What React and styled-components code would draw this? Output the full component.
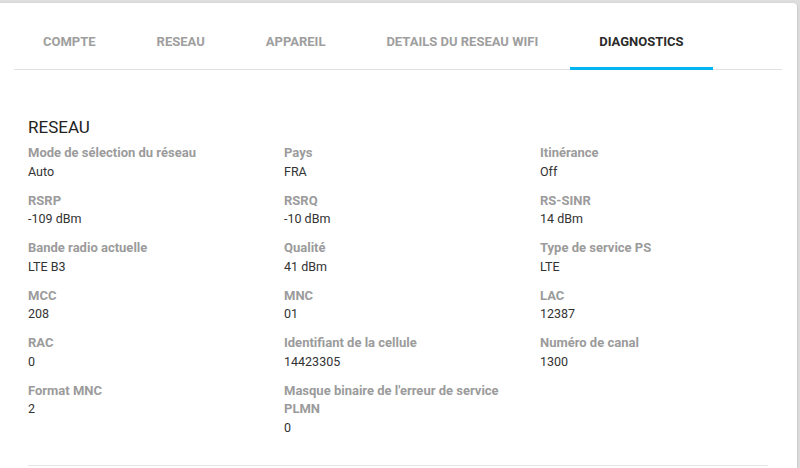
import React from 'react';
import styled, { createGlobalStyle } from 'styled-components';

const GlobalStyle = createGlobalStyle`
  html, body {
    margin: 0;
    padding: 0;
    background: #dedede;
    font-family: Roboto, 'Liberation Sans', sans-serif;
    overflow: hidden;
  }
`;

const Card = styled.div`
  margin-top: 3px;
  width: 797px;
  height: calc(100vh - 3px);
  overflow: hidden;
  background: #ffffff;
  border-top-right-radius: 4px;
  box-shadow: 0 1px 3px rgba(0, 0, 0, 0.18);
`;

const TabBar = styled.div`
  display: flex;
  gap: 3px;
  margin: 0 15px 0 14px;
  border-bottom: 1px solid #e0e0e0;
`;

const Tab = styled.div`
  box-sizing: border-box;
  height: 67px;
  padding: 32px 29px 0;
  margin-bottom: -1px;
  font-size: 13px;
  line-height: 14px;
  font-weight: 700;
  white-space: nowrap;
  color: ${(p) => (p.active ? '#2b2b2b' : '#9e9e9e')};
  border-bottom: 3px solid ${(p) => (p.active ? '#05b5f2' : 'transparent')};
`;

const Content = styled.div`
  padding: 47px 0 0 28px;
`;

const Heading = styled.h2`
  margin: 0 0 7px;
  font-size: 17px;
  line-height: 20px;
  font-weight: 400;
  color: #222;
`;

const Grid = styled.div`
  display: grid;
  grid-template-columns: repeat(3, 256px);
  row-gap: 11px;
`;

const Field = styled.div`
  padding-right: 24px;
`;

const Label = styled.div`
  font-size: 13px;
  line-height: 18.5px;
  font-weight: 700;
  color: #9b9b9b;
`;

const Value = styled.div`
  font-size: 12.5px;
  line-height: 18px;
  color: #333;
`;

const Divider = styled.div`
  margin: 28px 29px 0 0;
  border-top: 1px solid #e6e6e6;
`;

const tabs = ['COMPTE', 'RESEAU', 'APPAREIL', 'DETAILS DU RESEAU WIFI', 'DIAGNOSTICS'];

const fields = [
  ['Mode de sélection du réseau', 'Auto'],
  ['Pays', 'FRA'],
  ['Itinérance', 'Off'],
  ['RSRP', '-109 dBm'],
  ['RSRQ', '-10 dBm'],
  ['RS-SINR', '14 dBm'],
  ['Bande radio actuelle', 'LTE B3'],
  ['Qualité', '41 dBm'],
  ['Type de service PS', 'LTE'],
  ['MCC', '208'],
  ['MNC', '01'],
  ['LAC', '12387'],
  ['RAC', '0'],
  ['Identifiant de la cellule', '14423305'],
  ['Numéro de canal', '1300'],
  ['Format MNC', '2'],
  ["Masque binaire de l'erreur de service PLMN", '0'],
];

export default function App() {
  return (
    <>
      <GlobalStyle />
      <Card>
        <TabBar>
          {tabs.map((t) => (
            <Tab key={t} active={t === 'DIAGNOSTICS'}>
              {t}
            </Tab>
          ))}
        </TabBar>
        <Content>
          <Heading>RESEAU</Heading>
          <Grid>
            {fields.map(([label, value]) => (
              <Field key={label}>
                <Label>{label}</Label>
                <Value>{value}</Value>
              </Field>
            ))}
          </Grid>
          <Divider />
        </Content>
      </Card>
    </>
  );
}
